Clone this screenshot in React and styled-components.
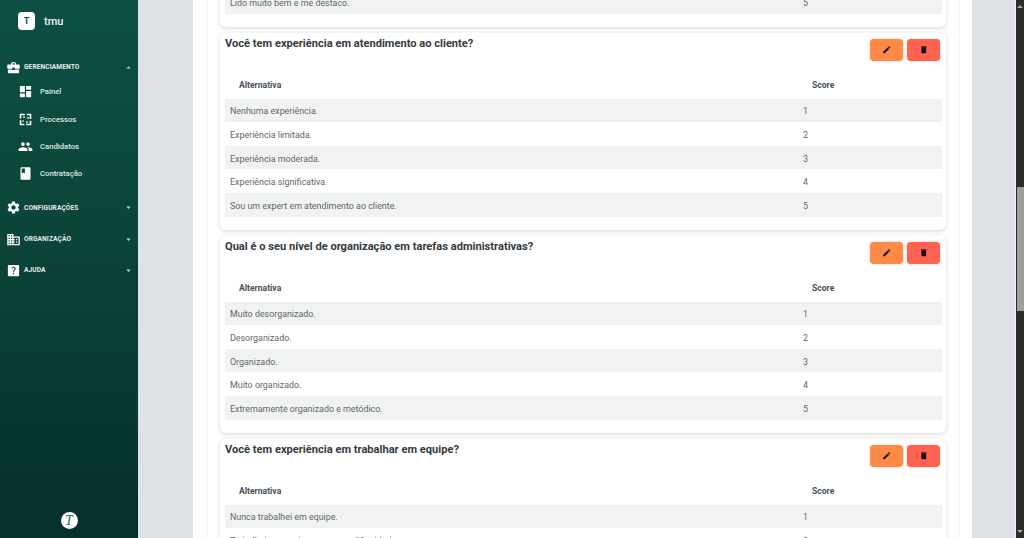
import React from "react";
import styled, { createGlobalStyle } from "styled-components";
import {
  MdBusinessCenter, MdDashboard, MdPeople, MdBook, MdSettings,
  MdDomain, MdHelpCenter, MdArrowDropUp, MdArrowDropDown, MdEdit, MdDelete,
} from "react-icons/md";

const Global = createGlobalStyle`
  html, body { margin: 0; height: 100%; overflow: hidden; }
  body { font-family: Roboto, "Liberation Sans", sans-serif; background: #dee2e6; }
`;

const Shell = styled.div`
  display: flex;
  height: 538px;
  width: 1024px;
  overflow: hidden;
`;

const Sidebar = styled.aside`
  width: 138px;
  flex: none;
  display: flex;
  flex-direction: column;
  background: linear-gradient(180deg, #0d5043 0%, #0b4439 45%, #05302c 95%);
  color: #e4ecea;
`;

const Brand = styled.div`
  display: flex;
  align-items: center;
  gap: 9px;
  padding: 12px 0 0 18px;
  margin-bottom: 26px;
`;

const BrandMark = styled.div`
  width: 17px;
  height: 18px;
  border-radius: 4px;
  background: #fff;
  color: #0d4f43;
  font-size: 9px;
  font-weight: 700;
  display: flex;
  align-items: center;
  justify-content: center;
`;

const BrandName = styled.span`
  font-size: 11px;
  font-weight: 500;
  color: #f2f6f5;
`;

const Nav = styled.nav`
  display: flex;
  flex-direction: column;
  gap: 9.25px;
`;

const SectionHead = styled.div`
  height: 22px;
  display: flex;
  align-items: center;
  padding: 0 4px 0 6px;
  font-size: 6.6px;
  font-weight: 700;
  text-transform: uppercase;
  letter-spacing: 0.1px;
  svg:first-child { font-size: 15px; margin-right: 3px; color: #fff; flex: none; }
  span { flex: 1; }
  svg:last-child { font-size: 11px; color: #b9cdc8; flex: none; }
`;

const SubList = styled.div`
  display: flex;
  flex-direction: column;
`;

const SubItem = styled.div`
  height: 27.4px;
  display: flex;
  align-items: center;
  padding-left: 18px;
  gap: 7px;
  font-size: 7.7px;
  font-weight: 500;
  color: #dfe8e6;
  svg { font-size: 15px; width: 15px; height: 15px; color: #fff; flex: none; }
`;

const SideFoot = styled.div`
  margin-top: auto;
  padding-bottom: 9px;
  display: flex;
  justify-content: center;
`;

const FootMark = styled.div`
  width: 17px;
  height: 17px;
  border-radius: 50%;
  background: #fff;
  color: #1a6a5a;
  font: italic 400 14px/17px "Liberation Serif", serif;
  text-align: center;
`;

const Main = styled.main`
  flex: 1;
  min-width: 0;
  height: 538px;
  overflow: hidden;
  padding: 0 43px 0 55px;
  border-right: 1px solid #eef0f2;
`;

const Panel = styled.div`
  height: 100%;
  background: #fff;
  padding: 0 12px 0 14px;
  box-sizing: border-box;
`;

const Inner = styled.div`
  height: 100%;
  padding: 0 13px 0 12px;
  border-left: 1px solid #f3f4f5;
  border-right: 1px solid #f3f4f5;
  overflow: hidden;
`;

const List = styled.div`
  display: flex;
  flex-direction: column;
  gap: 6px;
  margin-top: -10px;
`;

const Card = styled.section`
  background: #fff;
  border-radius: 6px;
  box-shadow: 0 1px 4px rgba(40, 50, 60, 0.2);
  padding: ${(p) => (p.$clipped ? "0 4px 13px 5px" : "3px 4px 13px 5px")};
`;

const CardHead = styled.div`
  display: flex;
  justify-content: space-between;
  align-items: flex-start;
  height: 40px;
  padding-right: 2px;
`;

const Question = styled.h3`
  margin: 1px 0 0;
  font-size: 11.1px;
  line-height: 14px;
  font-weight: 700;
  color: #343a40;
`;

const Actions = styled.div`
  display: flex;
  gap: 4px;
  padding-top: 3px;
`;

const ActionButton = styled.button`
  width: 33px;
  height: 22px;
  padding: 0;
  border: 0;
  border-radius: 4px;
  background: ${(p) => p.$bg};
  box-shadow: 0 0 2px rgba(255, 120, 70, 0.5);
  color: #111;
  display: flex;
  align-items: center;
  justify-content: center;
  font-size: 9.5px;
`;

const HeadRow = styled.div`
  display: grid;
  grid-template-columns: 1fr 144px;
  height: 23px;
  box-sizing: border-box;
  padding-bottom: 5px;
  align-items: center;
  font-size: 8.6px;
  font-weight: 700;
  color: #49525a;
  span { padding-left: 14px; }
`;

const Row = styled.div`
  display: grid;
  grid-template-columns: 1fr 144px;
  height: 23.6px;
  box-sizing: border-box;
  padding-top: 2px;
  align-items: center;
  font-size: 8.9px;
  color: #5f666c;
  background: ${(p) => (p.$odd ? "#f1f3f3" : "#fff")};
  span { padding-left: 5px; }
`;

const Scrollbar = styled.div`
  width: 8px;
  flex: none;
  background: #2b2b2b;
  box-sizing: border-box;
  padding: 5px 1px 5px 1px;
  display: flex;
  flex-direction: column;
  justify-content: space-between;
  align-items: center;
  position: relative;
`;

const Arrow = styled.div`
  width: 0;
  height: 0;
  border-left: 3px solid transparent;
  border-right: 3px solid transparent;
  border-${(p) => (p.$up ? "bottom" : "top")}: 3px solid #a8a8a8;
`;

const Thumb = styled.div`
  position: absolute;
  left: 1px;
  right: 0;
  top: 187px;
  height: 124px;
  background: #9f9f9f;
`;

const ProcessIcon = () => (
  <svg viewBox="0 0 24 24" fill="none" stroke="currentColor" strokeWidth="2.6">
    <path d="M4 10.5V4H11" />
    <path d="M14 4H20V11" />
    <path d="M20 14V20H13" />
    <path d="M10 20H4V13" />
    <path d="M8 8l3 0M16 8l0 3M16 16l-3 0M8 16l0-3" strokeWidth="2" />
  </svg>
);

const cards = [
  {
    q: "Você tem experiência em atendimento ao cliente?",
    a: ["Nenhuma experiência.", "Experiência limitada.", "Experiência moderada.", "Experiência significativa.", "Sou um expert em atendimento ao cliente."],
  },
  {
    q: "Qual é o seu nível de organização em tarefas administrativas?",
    a: ["Muito desorganizado.", "Desorganizado.", "Organizado.", "Muito organizado.", "Extremamente organizado e metódico."],
  },
  {
    q: "Você tem experiência em trabalhar em equipe?",
    a: ["Nunca trabalhei em equipe.", "Trabalhei em equipe, mas com dificuldades.", "Trabalho bem em equipe.", "Trabalho muito bem em equipe.", "Sou um excelente colega de equipe."],
  },
];

const subs = [
  [MdDashboard, "Painel"],
  [ProcessIcon, "Processos"],
  [MdPeople, "Candidatos"],
  [MdBook, "Contratação"],
];

export default function App() {
  return (
    <Shell>
      <Global />
      <Sidebar>
        <Brand>
          <BrandMark>T</BrandMark>
          <BrandName>tmu</BrandName>
        </Brand>
        <Nav>
          <div>
            <SectionHead>
              <MdBusinessCenter />
              <span>Gerenciamento</span>
              <MdArrowDropUp />
            </SectionHead>
            <SubList>
              {subs.map(([Icon, label]) => (
                <SubItem key={label}>
                  <Icon />
                  {label}
                </SubItem>
              ))}
            </SubList>
          </div>
          <SectionHead>
            <MdSettings />
            <span>Configurações</span>
            <MdArrowDropDown />
          </SectionHead>
          <SectionHead>
            <MdDomain />
            <span>Organização</span>
            <MdArrowDropDown />
          </SectionHead>
          <SectionHead>
            <MdHelpCenter />
            <span>Ajuda</span>
            <MdArrowDropDown />
          </SectionHead>
        </Nav>
        <SideFoot>
          <FootMark>T</FootMark>
        </SideFoot>
      </Sidebar>
      <Main>
        <Panel>
          <Inner>
            <List>
              <Card $clipped>
                <Row $odd>
                  <span>Lido muito bem e me destaco.</span>
                  <span>5</span>
                </Row>
              </Card>
              {cards.map((c) => (
                <Card key={c.q}>
                  <CardHead>
                    <Question>{c.q}</Question>
                    <Actions>
                      <ActionButton $bg="#ff8a47" aria-label="Editar"><MdEdit /></ActionButton>
                      <ActionButton $bg="#ff6250" aria-label="Excluir"><MdDelete /></ActionButton>
                    </Actions>
                  </CardHead>
                  <HeadRow>
                    <span>Alternativa</span>
                    <span>Score</span>
                  </HeadRow>
                  {c.a.map((t, i) => (
                    <Row key={t} $odd={i % 2 === 0}>
                      <span>{t}</span>
                      <span>{i + 1}</span>
                    </Row>
                  ))}
                </Card>
              ))}
            </List>
          </Inner>
        </Panel>
      </Main>
      <Scrollbar>
        <Arrow $up />
        <Thumb />
        <Arrow />
      </Scrollbar>
    </Shell>
  );
}
